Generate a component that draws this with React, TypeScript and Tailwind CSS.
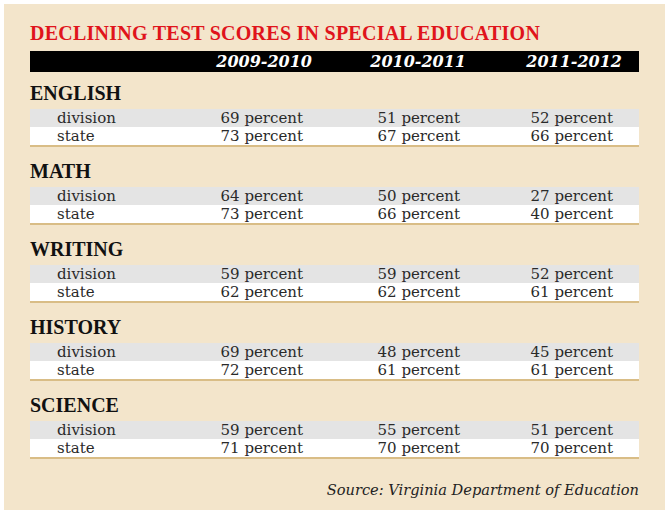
import React from "react";

const sections = [
  { name: "ENGLISH", division: [69, 51, 52], state: [73, 67, 66] },
  { name: "MATH", division: [64, 50, 27], state: [73, 66, 40] },
  { name: "WRITING", division: [59, 59, 52], state: [62, 62, 61] },
  { name: "HISTORY", division: [69, 48, 45], state: [72, 61, 61] },
  { name: "SCIENCE", division: [59, 55, 51], state: [71, 70, 70] },
];

const serif = { fontFamily: '"DejaVu Serif", serif' };
const times = { fontFamily: '"Liberation Serif", serif' };

function Row({ label, values, bg }: { label: string; values: number[]; bg: string }) {
  return (
    <div className={`flex h-[18px] items-center text-[15px] leading-[18px] text-[#2a2a2a] ${bg}`} style={serif}>
      <div className="w-[120px] pl-[27px]">{label}</div>
      <div className="w-[153px] text-right">{values[0]} percent</div>
      <div className="w-[157px] text-right">{values[1]} percent</div>
      <div className="w-[153px] text-right">{values[2]} percent</div>
    </div>
  );
}

export default function App() {
  return (
    <div className="w-[670px] h-[514px] bg-white p-[4px] pr-[5px]">
      <div className="h-[506px] bg-[#f3e5cb] px-[26px] pt-[19px]">
        <div className="text-[20px] leading-[20px] font-bold text-[#e0141b] tracking-[0.25px]" style={times}>
          DECLINING TEST SCORES IN SPECIAL EDUCATION
        </div>
        <div className="mt-[8px] flex h-[21px] items-center bg-black text-white font-bold italic text-[16px] leading-[21px]" style={serif}>
          <div className="w-[120px]" />
          <div className="w-[162px] text-right">2009-2010</div>
          <div className="w-[154px] text-right">2010-2011</div>
          <div className="w-[156px] text-right">2011-2012</div>
        </div>
        <div className="mt-[11px] flex flex-col gap-[14px]">
          {sections.map((s) => (
            <div key={s.name}>
              <div className="text-[20px] leading-[20px] font-bold text-[#111]" style={times}>
                {s.name}
              </div>
              <div className="mt-[6px] border-b-2 border-[#d9bd86]">
                <Row label="division" values={s.division} bg="bg-[#e4e4e4]" />
                <Row label="state" values={s.state} bg="bg-white" />
              </div>
            </div>
          ))}
        </div>
        <div className="mt-[20px] text-right text-[14.6px] italic text-[#222]" style={serif}>
          Source: Virginia Department of Education
        </div>
      </div>
    </div>
  );
}
